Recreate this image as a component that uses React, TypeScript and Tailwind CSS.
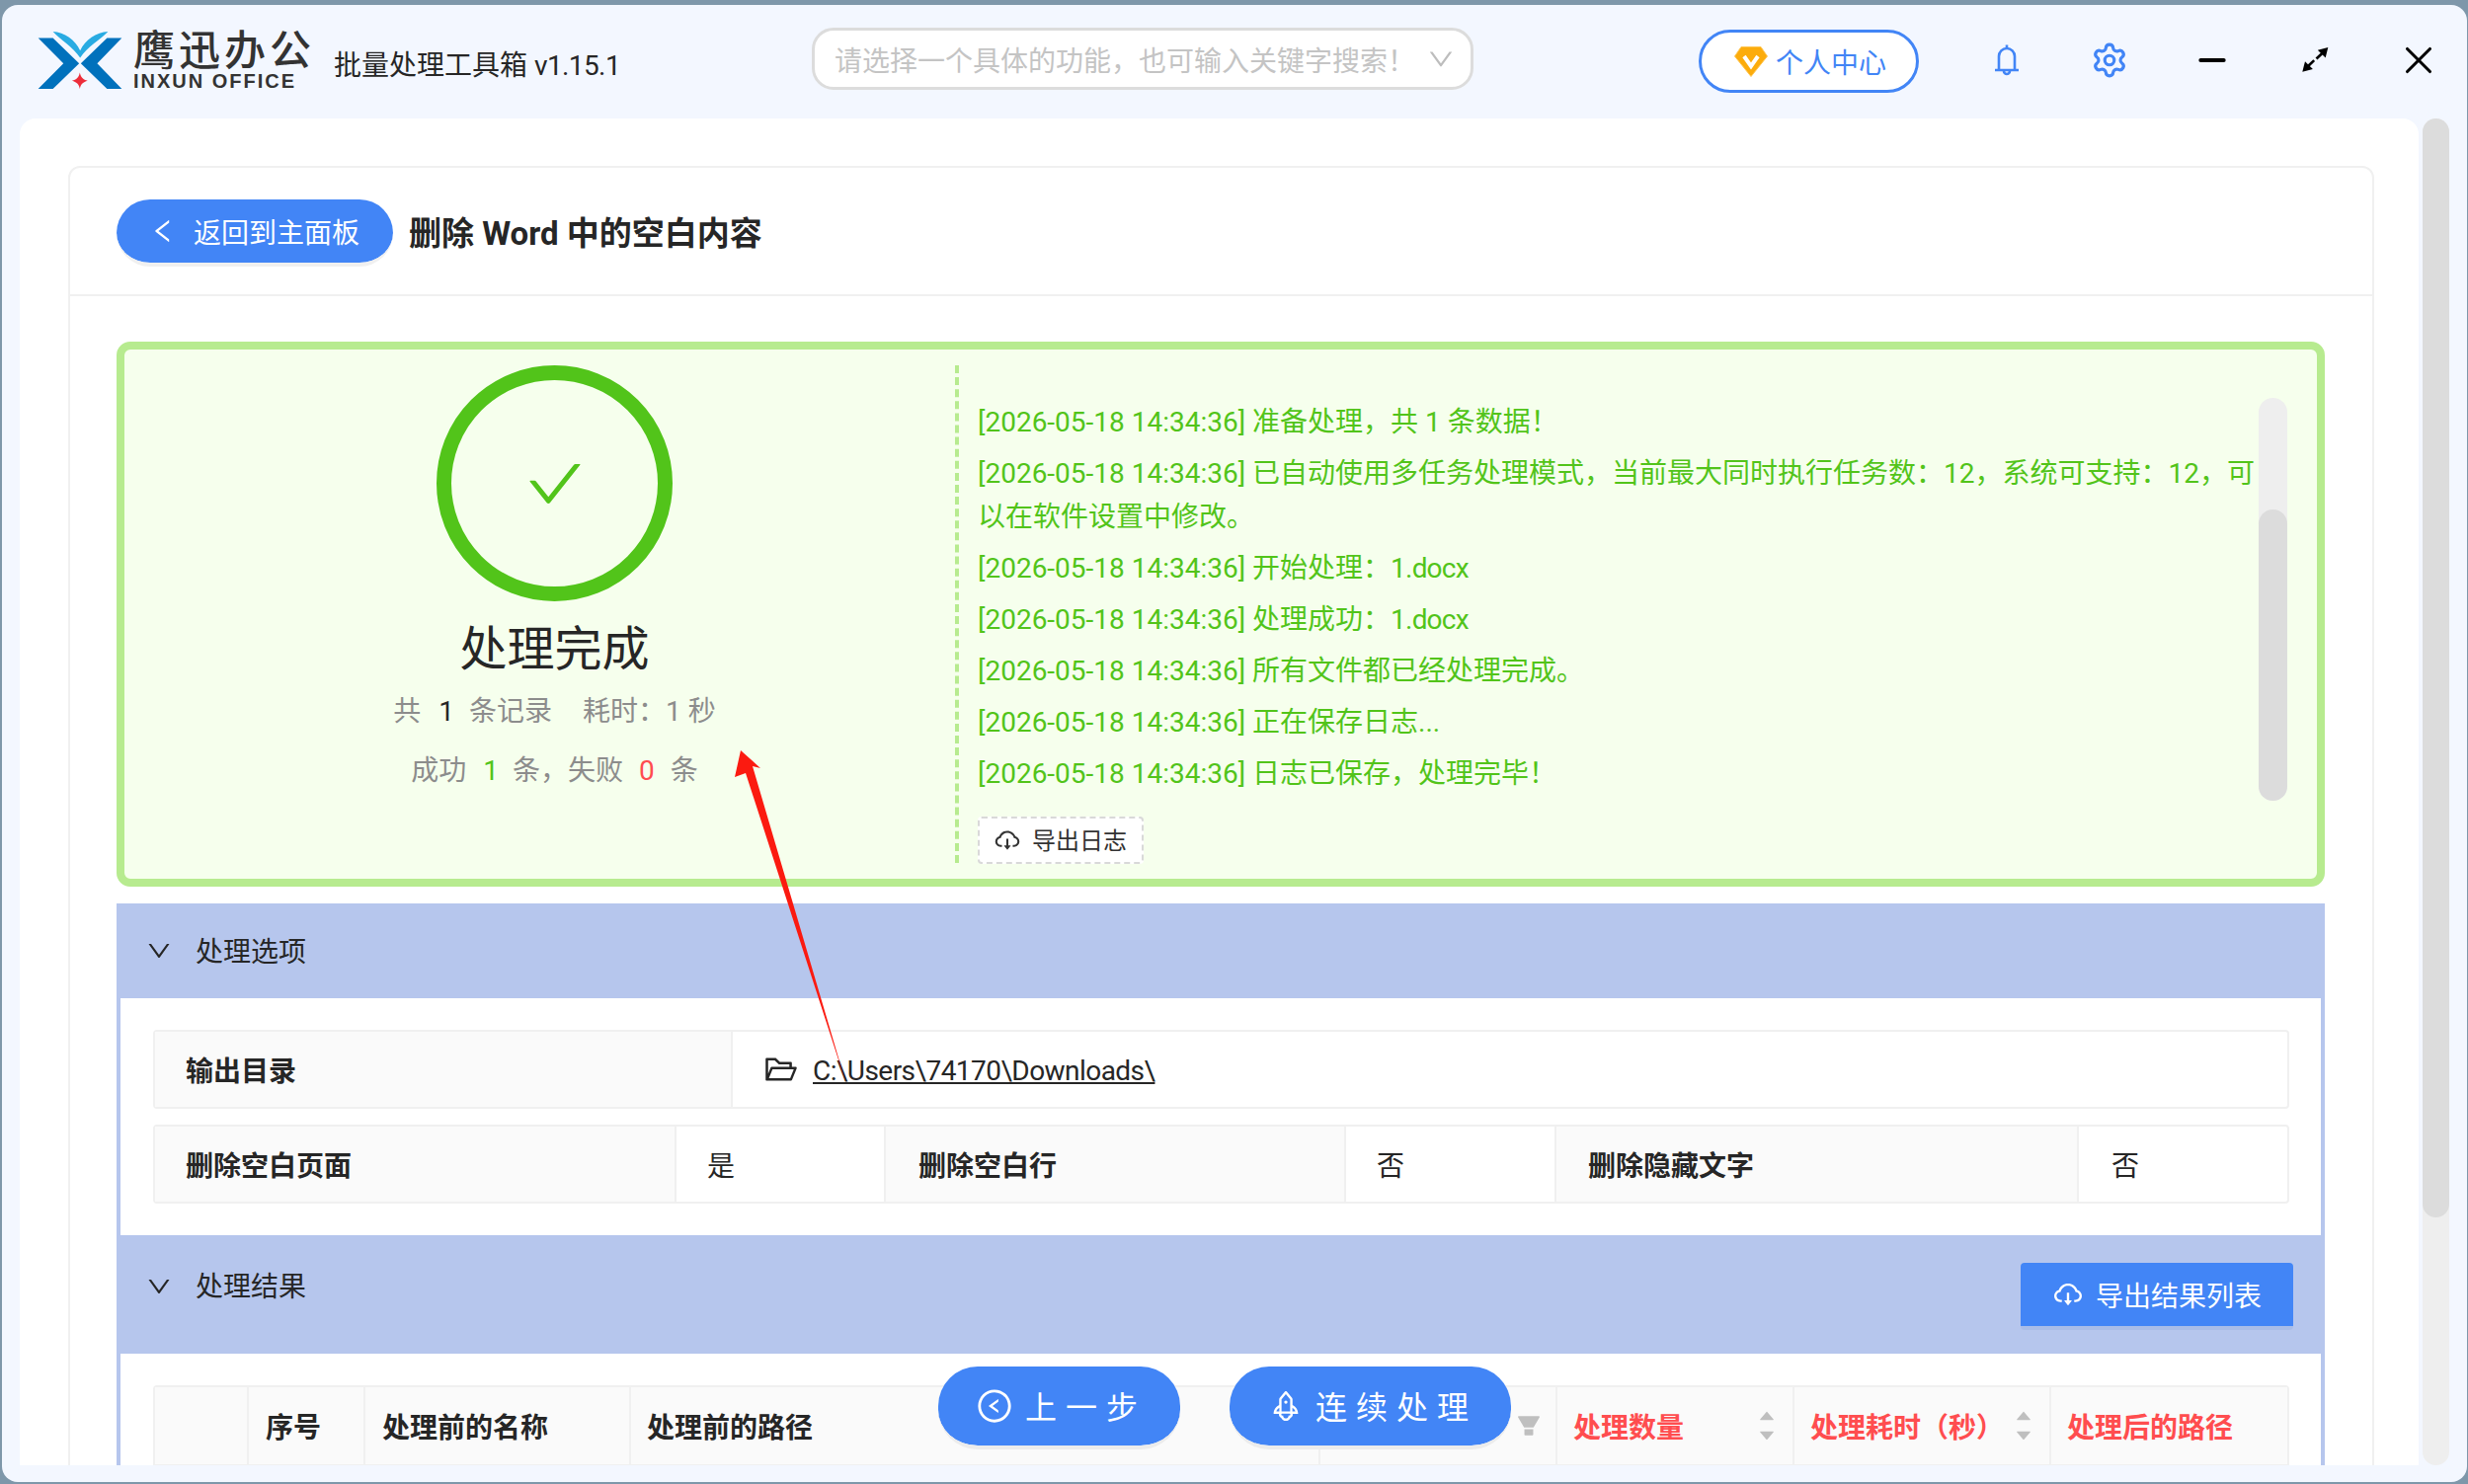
import React from 'react';
import {
  AiOutlineCheck,
  AiOutlineCloudDownload,
  AiOutlineDown,
  AiOutlineFolderOpen,
  AiOutlineLeft,
  AiOutlineLeftCircle,
  AiOutlineRocket,
  AiFillCaretDown,
  AiFillCaretUp,
  AiFillFilter,
} from 'react-icons/ai';
import { Minus, Settings, X } from 'lucide-react';

const logs: { time: string; text: string; file?: string }[] = [
  { time: '[2026-05-18 14:34:36]', text: '准备处理，共 1 条数据！' },
  { time: '[2026-05-18 14:34:36]', text: '已自动使用多任务处理模式，当前最大同时执行任务数：12，系统可支持：12，可以在软件设置中修改。' },
  { time: '[2026-05-18 14:34:36]', text: '开始处理：', file: '1.docx' },
  { time: '[2026-05-18 14:34:36]', text: '处理成功：', file: '1.docx' },
  { time: '[2026-05-18 14:34:36]', text: '所有文件都已经处理完成。' },
  { time: '[2026-05-18 14:34:36]', text: '正在保存日志...' },
  { time: '[2026-05-18 14:34:36]', text: '日志已保存，处理完毕！' },
];

const Logo = () => (
  <svg width="88" height="62" viewBox="50 55 265 185">
    <polygon points="55,80 100,80 180,157 100,235 55,235 132,157" fill="#0071bc" />
    <polygon points="310,80 265,80 185,157 265,235 310,235 235,157" fill="#0071bc" />
    <path d="M100 60 C135 62 168 85 183 118 C198 85 232 62 268 60 C245 85 205 105 183 140 C160 105 122 85 100 60 Z" fill="#29abe2" />
    <path d="M182 185 C185 200 192 206 206 210 C192 214 185 220 182 235 C179 220 172 214 158 210 C172 206 179 200 182 185 Z" fill="#ed2d3a" />
  </svg>
);

const Gem = () => (
  <svg width="34" height="31" viewBox="0 0 34 31">
    <polygon points="7,0.5 27,0.5 33.5,10 17,30.5 0.5,10" fill="#fcac0c" stroke="#ffc653" strokeWidth="1" />
    <polyline points="10,10 17,20 24,10" fill="none" stroke="#fff" strokeWidth="4" />
  </svg>
);

const BellIcon = () => (
  <svg width="24" height="32" viewBox="0 0 24 32" fill="none" stroke="#4285f6" strokeWidth="2.6">
    <path d="M4 26 V12 a8 8 0 0 1 16 0 V26" />
    <path d="M0 26 H24" />
    <path d="M12 0.5 V4" />
    <path d="M9 27 a3 3 0 0 0 6 0" />
  </svg>
);

const ExpandIcon = () => (
  <svg width="27" height="25" viewBox="0 0 80 76" className="text-black">
    <polygon points="79,0 47,8 71,32" fill="currentColor" />
    <polygon points="0,75 32,67 8,43" fill="currentColor" />
    <line x1="60" y1="19" x2="43" y2="35" stroke="currentColor" strokeWidth="8" />
    <line x1="19" y1="56" x2="36" y2="40" stroke="currentColor" strokeWidth="8" />
  </svg>
);

const SortIcon = () => (
  <span className="mr-[16px] flex flex-col text-[#bfbfbf]">
    <AiFillCaretUp size={20} />
    <AiFillCaretDown size={20} />
  </span>
);

const LabelCell = ({ w, children, red }: { w: string; children?: React.ReactNode; red?: boolean }) => (
  <div className={`${w} h-full shrink-0 flex items-center bg-[#fafafa] border-r-2 border-[#f0f0f0] font-bold ${red ? 'text-[#ff4d4f]' : 'text-[#262626]'}`}>
    {children}
  </div>
);

const App = () => {
  return (
    <div className="relative w-[2499px] h-[1503px] overflow-hidden bg-[#7e97aa] pt-[5px] pl-[2px] pr-[1px] font-['Roboto','Noto_Sans_CJK_SC',sans-serif] text-[28px] text-[#262626]">
      <div className="w-full h-[1496px] rounded-[16px] bg-[#f3f7ff] flex flex-col overflow-hidden">
        <header className="h-[115px] shrink-0 flex items-center relative">
          <div className="ml-[35px] mt-[-4px]">
            <Logo />
          </div>
          <div className="ml-[10px] flex flex-col mt-[-6px]">
            <span className="font-['Noto_Sans_CJK_SC',sans-serif] font-medium text-[42px] leading-[40px] tracking-[4px] text-[#333]">鹰迅办公</span>
            <span className="mt-[4px] font-['Liberation_Sans',sans-serif] font-bold text-[20px] leading-[20px] tracking-[2px] text-[#333]">INXUN OFFICE</span>
          </div>
          <span className="ml-[19px] mt-[8px] whitespace-nowrap">批量处理工具箱 <span className="tracking-[-0.6px]">v1.15.1</span></span>
          <div className="absolute left-[820px] top-[23px] w-[670px] h-[63px] flex items-center rounded-[22px] bg-white border-[3px] border-[#dcdcdc] pl-[20px] pr-[15px] text-[#c4c4c4]">
            <span className="flex-1 whitespace-nowrap pt-[6px]">请选择一个具体的功能，也可输入关键字搜索！</span>
            <AiOutlineDown size={30} className="text-[#bdbdbd]" />
          </div>
          <div className="absolute left-[1718px] top-[25px] w-[223px] h-[64px] flex items-center rounded-[32px] bg-white border-[3px] border-[#4285f6] pl-[33px] text-[#4285f6]">
            <Gem />
            <span className="ml-[8px] pt-[6px]">个人中心</span>
          </div>
          <div className="absolute left-[2018px] top-[40px]">
            <BellIcon />
          </div>
          <Settings size={38} strokeWidth={2} className="absolute left-[2115px] top-[37px] text-[#4285f6]" />
          <Minus size={40} strokeWidth={2.4} className="absolute left-[2218px] top-[36px] text-black" />
          <div className="absolute left-[2329px] top-[43px]">
            <ExpandIcon />
          </div>
          <X size={46} strokeWidth={1.6} className="absolute left-[2424px] top-[33px] text-black" />
        </header>

        <div className="flex flex-1 min-h-0">
          <main className="ml-[18px] w-[2429px] h-[1364px] rounded-t-[16px] bg-white overflow-hidden pl-[49px] pt-[48px]">
            <div className="w-[2335px] rounded-[12px] border-2 border-[#f0f0f0]">
              <div className="h-[130px] border-b-2 border-[#f0f0f0] flex items-start pt-[32px] pl-[47px]">
                <button className="w-[280px] h-[68px] rounded-[34px] bg-[#4285f6] border-b-4 border-[#f0f0f0] bg-clip-padding flex items-center pl-[32px] text-white">
                  <AiOutlineLeft size={30} />
                  <span className="ml-[16px] pt-[6px] whitespace-nowrap">返回到主面板</span>
                </button>
                <h1 className="ml-[16px] h-[64px] pt-[6px] flex items-center font-bold text-[#262626] text-[33px] whitespace-nowrap">删除 Word 中的空白内容</h1>
              </div>

              <div className="pl-[47px] pt-[46px]">
                <section className="w-[2236px] h-[552px] rounded-[14px] border-[8px] border-[#b7eb8f] bg-[#f6ffed] flex">
                  <div className="w-[841px] shrink-0 pl-[30px] pt-[16px] flex flex-col items-center">
                    <div className="w-[239px] h-[239px] rounded-full border-[15px] border-[#52c41a] flex items-center justify-center">
                      <AiOutlineCheck size={64} className="text-[#52c41a]" />
                    </div>
                    <div className="mt-[17px] text-[48px] leading-[64px] text-[#262626]">处理完成</div>
                    <div className="mt-[9px] leading-[44px] text-[#8c8c8c] whitespace-nowrap">
                      共<span className="ml-[18px] mr-[15px] text-[#262626]">1</span>条记录<span className="ml-[31px]">耗时：1 秒</span>
                    </div>
                    <div className="mt-[16px] leading-[44px] text-[#8c8c8c] whitespace-nowrap">
                      成功<span className="ml-[17px] mr-[14px] text-[#52c41a]">1</span>条，失败<span className="mx-[16px] text-[#ff4d4f]">0</span>条
                    </div>
                  </div>

                  <div className="flex-1 mt-[16px] h-[504px] border-l-4 border-dashed border-[#b7eb8f] pl-[19px]">
                    <div className="flex h-[457px]">
                      <div className="w-[1297px] pt-[36px] text-[#52c41a]">
                        {logs.map((log, i) => (
                          <p key={i} className="leading-[44px] mb-[8px]">
                            {log.time} {log.text}
                            {log.file && <span className="tracking-[-0.8px]">{log.file}</span>}
                          </p>
                        ))}
                      </div>
                      <div className="relative mt-[33px] w-[29px] h-[408px] rounded-full bg-[#eeeeee]">
                        <div className="absolute left-0 right-0 top-[113px] bottom-0 rounded-full bg-[#dcdcdc]" />
                      </div>
                    </div>
                    <button className="w-[168px] h-[48px] rounded-[4px] border-2 border-dashed border-[#d9d9d9] bg-white flex items-center pl-[14px] text-[24px] text-[#333]">
                      <AiOutlineCloudDownload size={28} />
                      <span className="ml-[11px] pt-[2px]">导出日志</span>
                    </button>
                  </div>
                </section>

                <section className="mt-[17px] w-[2236px]">
                  <div className="h-[96px] bg-[#b6c6ed] flex items-center pl-[29px]">
                    <AiOutlineDown size={28} />
                    <span className="ml-[23px] pt-[3px]">处理选项</span>
                  </div>
                  <div className="h-[240px] border-x-4 border-[#b6c6ed] pt-[32px] pl-[33px]">
                    <div className="w-[2163px] h-[80px] rounded-[4px] border-2 border-[#f0f0f0] flex">
                      <LabelCell w="w-[585px]"><span className="pl-[31px] pt-[5px]">输出目录</span></LabelCell>
                      <div className="flex items-center pl-[31px]">
                        <AiOutlineFolderOpen size={36} />
                        <span className="ml-[14px] pt-[3px] underline tracking-[-0.55px]">C:\Users\74170\Downloads\</span>
                      </div>
                    </div>
                    <div className="mt-[16px] w-[2163px] h-[80px] rounded-[4px] border-2 border-[#f0f0f0] flex">
                      <LabelCell w="w-[528px]"><span className="pl-[31px] pt-[5px]">删除空白页面</span></LabelCell>
                      <div className="w-[212px] border-r-2 border-[#f0f0f0] flex items-center pl-[31px] pt-[5px]">是</div>
                      <LabelCell w="w-[466px]"><span className="pl-[33px] pt-[5px]">删除空白行</span></LabelCell>
                      <div className="w-[213px] border-r-2 border-[#f0f0f0] flex items-center pl-[31px] pt-[5px]">否</div>
                      <LabelCell w="w-[529px]"><span className="pl-[32px] pt-[5px]">删除隐藏文字</span></LabelCell>
                      <div className="flex-1 flex items-center pl-[33px] pt-[5px]">否</div>
                    </div>
                  </div>
                </section>

                <section className="w-[2236px]">
                  <div className="h-[120px] bg-[#b6c6ed] flex items-start pl-[29px] pt-[28px]">
                    <AiOutlineDown size={28} className="mt-[10px]" />
                    <span className="ml-[23px] mt-[4px]">处理结果</span>
                    <button className="ml-auto mr-[32px] w-[276px] h-[68px] rounded-[4px] bg-[#4285f6] border-b-4 border-[#a9bde8] bg-clip-padding flex items-center justify-center text-white">
                      <AiOutlineCloudDownload size={32} />
                      <span className="ml-[12px] pt-[5px]">导出结果列表</span>
                    </button>
                  </div>
                  <div className="h-[200px] border-x-4 border-[#b6c6ed] pt-[32px] pl-[33px]">
                    <div className="w-[2163px] h-[82px] rounded-t-[4px] border-2 border-[#f0f0f0] flex">
                      <LabelCell w="w-[95px]" />
                      <LabelCell w="w-[118px]"><span className="pl-[17px] pt-[5px]">序号</span></LabelCell>
                      <LabelCell w="w-[269px]"><span className="pl-[17px] pt-[5px]">处理前的名称</span></LabelCell>
                      <LabelCell w="w-[698px]"><span className="pl-[16px] pt-[5px]">处理前的路径</span></LabelCell>
                      <LabelCell w="w-[240px]">
                        <AiFillFilter size={28} className="ml-auto mr-[13px] text-[#bfbfbf]" />
                      </LabelCell>
                      <LabelCell w="w-[240px]" red>
                        <span className="pl-[16px] pt-[5px] flex-1">处理数量</span>
                        <SortIcon />
                      </LabelCell>
                      <LabelCell w="w-[260px]" red>
                        <span className="pl-[16px] pt-[5px] flex-1 whitespace-nowrap">处理耗时（秒）</span>
                        <SortIcon />
                      </LabelCell>
                      <div className="flex-1 flex items-center bg-[#fafafa] font-bold text-[#ff4d4f] pl-[16px] pt-[5px]">处理后的路径</div>
                    </div>
                  </div>
                </section>
              </div>
            </div>
          </main>
          <div className="ml-[4px] w-[27px] h-[1364px] rounded-full bg-[#eeeeee] relative">
            <div className="absolute left-0 right-0 top-0 h-[1113px] rounded-full bg-[#dcdcdc]" />
          </div>
        </div>
      </div>

      {/* 悬浮按钮 */}
      <div className="absolute left-[950px] top-[1384px] flex gap-[50px]">
        <button className="w-[245px] h-[84px] rounded-[40px] bg-[#4285f6] border-b-4 border-[#ececec] bg-clip-padding flex items-center pl-[38px] text-white text-[32px] tracking-[9px]">
          <AiOutlineLeftCircle size={38} />
          <span className="ml-[12px] pt-[4px] whitespace-nowrap">上一步</span>
        </button>
        <button className="w-[285px] h-[84px] rounded-[40px] bg-[#4285f6] border-b-4 border-[#ececec] bg-clip-padding flex items-center pl-[39px] text-white text-[32px] tracking-[9px]">
          <AiOutlineRocket size={36} />
          <span className="ml-[12px] pt-[4px] whitespace-nowrap">连续处理</span>
        </button>
      </div>

      {/* 红色标注箭头 */}
      <svg className="absolute left-0 top-0 pointer-events-none" width="2499" height="1503">
        <polygon points="750,760 770,778 762,776 856,1095 755,783 744,787" fill="#fb1a10" />
      </svg>
    </div>
  );
};

export default App;
